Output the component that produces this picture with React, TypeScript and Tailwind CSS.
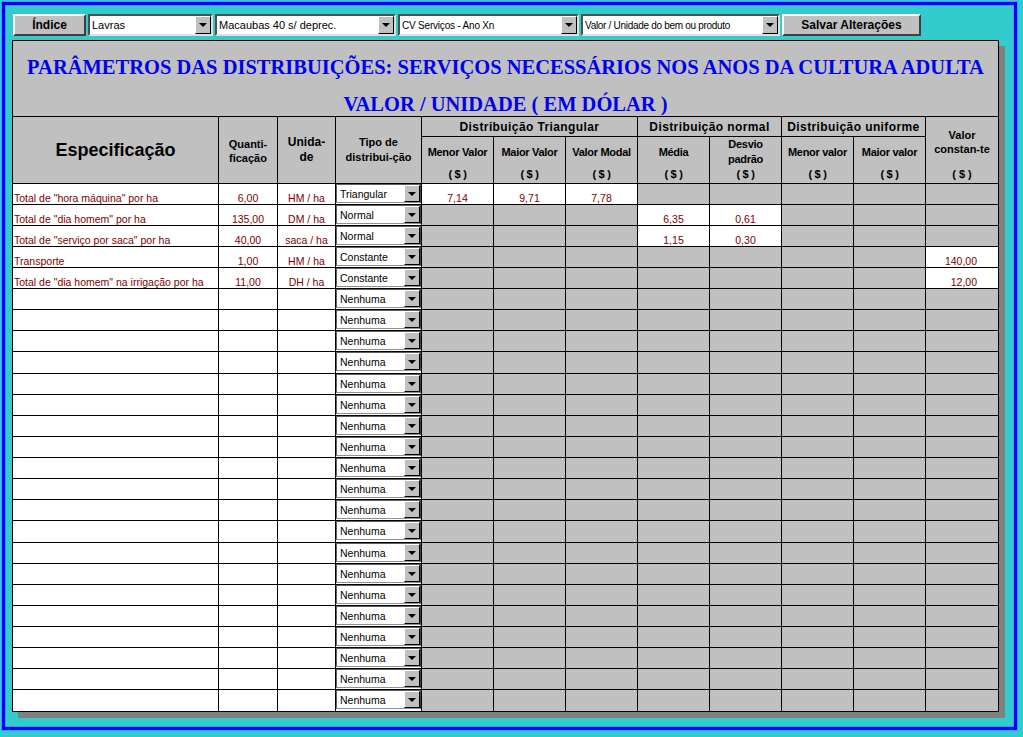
import React from "react";

const COLS = "grid-cols-[206px_59px_58px_86px_72px_72px_72px_72px_72px_72px_72px_72px]";

type Row = {
  spec: string;
  q: string;
  u: string;
  tipo: string;
  vals: Record<number, string>;
};

const rows: Row[] = [
  { spec: 'Total de "hora máquina" por ha', q: "6,00", u: "HM / ha", tipo: "Triangular", vals: { 0: "7,14", 1: "9,71", 2: "7,78" } },
  { spec: 'Total de "dia homem" por ha', q: "135,00", u: "DM / ha", tipo: "Normal", vals: { 3: "6,35", 4: "0,61" } },
  { spec: 'Total de "serviço por saca" por ha', q: "40,00", u: "saca / ha", tipo: "Normal", vals: { 3: "1,15", 4: "0,30" } },
  { spec: "Transporte", q: "1,00", u: "HM / ha", tipo: "Constante", vals: { 7: "140,00" } },
  { spec: 'Total de "dia homem" na irrigação por ha', q: "11,00", u: "DH / ha", tipo: "Constante", vals: { 7: "12,00" } },
  ...Array.from({ length: 20 }, () => ({ spec: "", q: "", u: "", tipo: "Nenhuma", vals: {} })),
];

const subHeads = ["Menor Valor", "Maior Valor", "Valor Modal", "Média", "Desvio\npadrão", "Menor valor", "Maior valor"];

function Arrow({ h }: { h: string }) {
  return (
    <div
      className={`flex ${h} w-[16px] shrink-0 items-center justify-center border border-t-white border-l-white border-r-black border-b-black bg-[#c0c0c0]`}
    >
      <svg width="8" height="4" viewBox="0 0 8 4">
        <polygon points="0,0 8,0 4,4" fill="#000" />
      </svg>
    </div>
  );
}

function ToolSelect({ text, w, size }: { text: string; w: string; size: string }) {
  return (
    <div
      className={`flex h-[22px] ${w} items-center border-2 border-t-[#505050] border-l-[#505050] border-b-[#e0e0e0] border-r-[#e0e0e0] bg-white`}
    >
      <span className={`flex-1 truncate pl-[2px] ${size} text-black`}>{text}</span>
      <Arrow h="h-[18px]" />
    </div>
  );
}

function Button({ label, w }: { label: string; w: string }) {
  return (
    <div
      className={`flex h-[22px] ${w} items-center justify-center border-2 border-t-white border-l-white border-r-[#404040] border-b-[#404040] bg-[#c0c0c0] text-[12px] font-bold text-black`}
    >
      {label}
    </div>
  );
}

export default function App() {
  return (
    <div className="h-[737px] w-[1023px] bg-[#33cccc] pt-[1px] pl-[1px] pr-[5px] pb-[6px] font-['Liberation_Sans',Arial,sans-serif]">
      <div className="h-full border border-[#3b9cff]">
        <div className="h-full border-[3px] border-[#0000ff]">
          <div className="h-full border border-[#3b9cff] bg-[#33cccc] pt-[8px]">
            {/* toolbar */}
            <div className="ml-[7px] flex gap-[2px]">
              <Button label="Índice" w="w-[73px]" />
              <ToolSelect text="Lavras" w="w-[125px]" size="text-[11px]" />
              <ToolSelect text="Macaubas 40 s/ deprec." w="w-[181px]" size="text-[11px]" />
              <ToolSelect text="CV Serviços - Ano Xn" w="w-[181px]" size="text-[10px] tracking-[-0.2px]" />
              <ToolSelect text="Valor / Unidade do bem ou produto" w="w-[199px]" size="text-[10px] tracking-[-0.3px]" />
              <Button label="Salvar Alterações" w="w-[139px]" />
            </div>

            {/* panel */}
            <div className="ml-[6px] mt-[4px] w-[987px] border border-black bg-[#c0c0c0] shadow-[6px_6px_0_#808080]">
              <div className="flex h-[76px] flex-col items-center border-b border-black pt-[8px] font-['Liberation_Serif','Times_New_Roman',serif] text-[20.5px] font-bold leading-[37px] text-[#0000ee]">
                <div>PARÂMETROS DAS DISTRIBUIÇÕES: SERVIÇOS NECESSÁRIOS NOS ANOS DA CULTURA ADULTA</div>
                <div>VALOR / UNIDADE ( EM DÓLAR )</div>
              </div>

              {/* header */}
              <div className={`grid ${COLS} grid-rows-[20px_47px] text-black`}>
                <div className="row-span-2 flex items-center justify-center border-r border-b border-black text-[18px] font-bold">
                  Especificação
                </div>
                <div className="row-span-2 flex items-center justify-center border-r border-b border-black pt-[2px] text-center text-[11px] font-bold leading-[14px]">
                  Quanti-<br />ficação
                </div>
                <div className="row-span-2 flex items-center justify-center border-r border-b border-black text-center text-[12px] font-bold leading-[15px]">
                  Unida-<br />de
                </div>
                <div className="row-span-2 flex items-center justify-center border-r border-b border-black text-center text-[11px] font-bold leading-[15px]">
                  Tipo de<br />distribui-ção
                </div>
                <div className="col-span-3 flex items-center justify-center border-r border-b border-black text-[12px] font-bold tracking-[0.4px]">
                  Distribuição Triangular
                </div>
                <div className="col-span-2 flex items-center justify-center border-r border-b border-black text-[12px] font-bold tracking-[0.4px]">
                  Distribuição normal
                </div>
                <div className="col-span-2 flex items-center justify-center border-r border-b border-black text-[12px] font-bold tracking-[0.4px]">
                  Distribuição uniforme
                </div>
                <div className="row-span-2 flex flex-col border-b border-black text-center text-[11px] font-bold leading-[14px]">
                  <div className="flex h-[50px] items-center justify-center">
                    Valor<br />constan-te
                  </div>
                  <div className="flex flex-1 items-center justify-center pb-[2px]">( $ )</div>
                </div>
                {subHeads.map((t) => (
                  <div key={t} className="flex flex-col border-r border-b border-black text-center text-[11px] font-bold leading-[15px] tracking-[-0.3px]">
                    <div className="flex h-[30px] items-center justify-center whitespace-pre-line">{t}</div>
                    <div className="flex flex-1 items-center justify-center pb-[1px]">( $ )</div>
                  </div>
                ))}
              </div>

              {/* body */}
              <div className={`grid ${COLS} text-[10.5px] leading-[12px] text-[#800000]`}>
                {rows.map((r, i) => {
                  const last = i === rows.length - 1;
                  const h = i === 8 || i === 16 ? "h-[22px]" : "h-[21px]";
                  const b = last ? "" : "border-b";
                  return (
                    <React.Fragment key={i}>
                      <div className={`${h} ${b} flex items-end border-r border-black bg-white pl-[1px] whitespace-nowrap`}>
                        {r.spec}
                      </div>
                      <div className={`${h} ${b} flex items-end justify-center border-r border-black bg-white`}>{r.q}</div>
                      <div className={`${h} ${b} flex items-end justify-center border-r border-black bg-white`}>{r.u}</div>
                      <div className={`${h} ${b} flex items-start border-r border-black bg-white`}>
                        <div className="flex h-[19px] w-full items-center border border-t-[#606060] border-l-[#606060] border-b-[#909090] border-r-[#404040] bg-white">
                          <span className="flex-1 pl-[3px] text-[10.5px] text-black">{r.tipo}</span>
                          <Arrow h="h-[17px]" />
                        </div>
                      </div>
                      {Array.from({ length: 8 }, (_, c) => {
                        const v = r.vals[c];
                        const white = v !== undefined;
                        const br = c === 7 ? "" : "border-r";
                        const align = c === 7 ? "justify-end pr-[21px]" : "justify-center";
                        return (
                          <div
                            key={c}
                            className={`${h} ${b} ${br} flex items-end ${align} border-black ${white ? "bg-white" : "bg-[#c0c0c0]"}`}
                          >
                            {v}
                          </div>
                        );
                      })}
                    </React.Fragment>
                  );
                })}
              </div>
            </div>
          </div>
        </div>
      </div>
    </div>
  );
}
